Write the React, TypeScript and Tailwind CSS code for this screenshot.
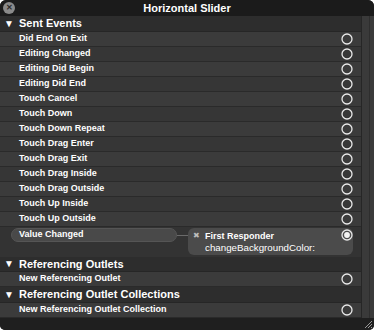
import React from "react";

const events = [
  "Did End On Exit",
  "Editing Changed",
  "Editing Did Begin",
  "Editing Did End",
  "Touch Cancel",
  "Touch Down",
  "Touch Down Repeat",
  "Touch Drag Enter",
  "Touch Drag Exit",
  "Touch Drag Inside",
  "Touch Drag Outside",
  "Touch Up Inside",
  "Touch Up Outside",
];

function Ring({ filled = false }: { filled?: boolean }) {
  return (
    <svg width="12" height="12" viewBox="0 0 12 12" className="shrink-0">
      <circle cx="6" cy="6" r="5" fill="none" stroke="#e8e8e8" strokeWidth="1.3" />
      {filled && <circle cx="6" cy="6" r="2.9" fill="#f4f4f4" />}
    </svg>
  );
}

function Header({ title, h }: { title: string; h: string }) {
  return (
    <div className={"flex items-center bg-[#2d2d2d] border-b border-[#262626] text-[11px] font-bold text-white " + h}>
      <span className="w-[19px] pl-[4px] text-[10px] leading-none">▼</span>
      <span>{title}</span>
    </div>
  );
}

function Row({ label, idx }: { label: string; idx: number }) {
  return (
    <div
      className={
        "flex h-[15px] items-center justify-between border-b border-[#2a2a2a] pl-[19px] pr-[8px] text-[9px] font-bold text-white " +
        (idx % 2 === 0 ? "bg-[#3b3b3b]" : "bg-[#363636]")
      }
    >
      <span>{label}</span>
      <Ring />
    </div>
  );
}

export default function App() {
  return (
    <div className="h-[333px] w-[374px] bg-white" style={{ fontFamily: '"Liberation Sans", Arial, sans-serif' }}>
      <div className="flex h-[330px] w-full flex-col overflow-hidden rounded-t-[6px] rounded-b-[5px] bg-[#2c2c2c]">
        {/* title bar */}
        <div className="relative flex h-[16px] items-center justify-center bg-[#1b1b1b] text-[11px] font-bold text-white">
          <div className="absolute left-[3px] top-[2px] flex h-[12px] w-[12px] items-center justify-center rounded-full bg-[#8a8a8a] text-[8px] leading-none text-[#2a2a2a]">
            ✕
          </div>
          Horizontal Slider
        </div>

        <div className="flex flex-1">
          <div className="flex flex-1 flex-col">
            <Header title="Sent Events" h="h-[16px]" />
            {events.map((e, i) => (
              <Row key={e} label={e} idx={i} />
            ))}

            <div className="flex h-[30px] items-start bg-[#333333] pl-[11px] pr-[8px] pt-[1px]">
              <div className="flex h-[14px] w-[166px] items-center rounded-full border border-[#555] bg-[#494949] pl-[7px] text-[9px] font-bold text-white">
                Value Changed
              </div>
              <div className="mt-[7px] h-px w-[11px] bg-[#6a6a6a]" />
              <div className="relative flex h-[27px] flex-1 flex-col justify-center rounded-[6px] bg-[#4b4b4b] pl-[17px] text-[9px] leading-[12px] text-white">
                <span className="absolute left-[5px] top-[2px] text-[8px] text-[#bdbdbd]">✖</span>
                <span className="font-bold">First Responder</span>
                <span className="text-[9.75px]">changeBackgroundColor:</span>
                <div className="absolute right-[0px] top-[1px]">
                  <Ring filled />
                </div>
              </div>
            </div>

            <Header title="Referencing Outlets" h="h-[15px]" />
            <Row label="New Referencing Outlet" idx={0} />
            <Header title="Referencing Outlet Collections" h="h-[16px]" />
            <Row label="New Referencing Outlet Collection" idx={0} />
          </div>
          <div className="w-[13px] border-l border-[#262626] bg-[#3a3a3a]">
            <div className="ml-[7px] h-full w-px bg-[#2e2e2e]" />
          </div>
        </div>

        {/* bottom bar */}
        <div className="relative h-[12px] bg-[#1f1f1f]">
          <svg className="absolute bottom-[1px] right-[1px]" width="10" height="10" viewBox="0 0 10 10">
            <path d="M9 2 L2 9 M9 5 L5 9 M9 8 L8 9" stroke="#9a9a9a" strokeWidth="1" />
          </svg>
        </div>
      </div>
    </div>
  );
}
